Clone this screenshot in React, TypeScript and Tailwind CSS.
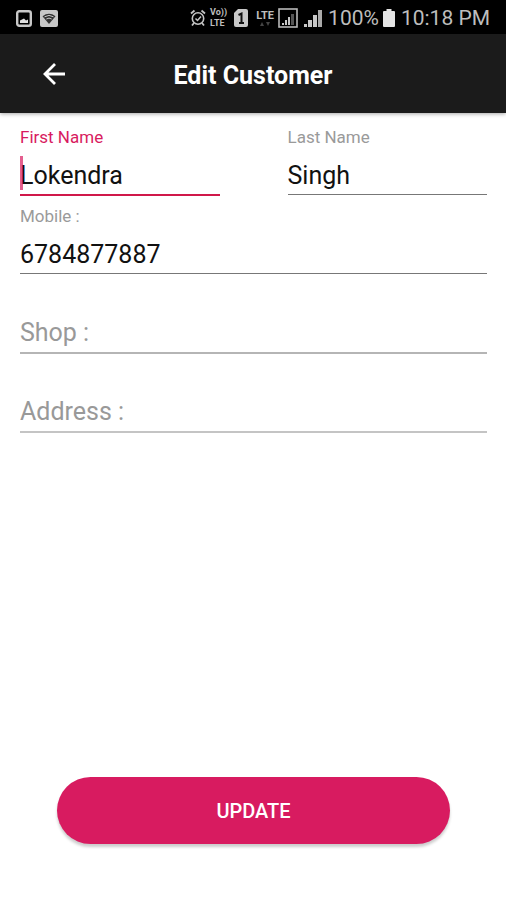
import { useId } from "react";

function ImageIcon() {
  return (
    <svg width="16" height="17" viewBox="0 0 16 17" aria-hidden="true">
      <rect x="1.200" y="1.200" width="13.600" height="14.600" rx="2" fill="none" stroke="#c8c8c8" strokeWidth="2.400" />
      <path d="M4 13v-2.500l2-1 2-1 2 2 2-1V13z" fill="#e0e0e0" />
    </svg>
  );
}

function WifiBadgeIcon() {
  return (
    <svg width="18" height="17" viewBox="0 0 18 17" aria-hidden="true">
      <rect width="18" height="17" rx="2" fill="#c8c8c8" />
      <path d="M2.500 6.200Q9 1.500 15.500 6.200L9 14z" fill="#333" />
      <path d="M4.500 6.800Q9 4 13.500 6.800M6.300 9Q9 7.200 11.700 9" fill="none" stroke="#c8c8c8" strokeWidth="1" />
    </svg>
  );
}

function AlarmIcon() {
  return (
    <svg width="16" height="18" viewBox="0 0 16 18" fill="none" stroke="#c4c4c4" aria-hidden="true">
      <circle cx="8" cy="9.500" r="5.700" strokeWidth="1.600" />
      <path d="M1 4.500L4.500 1.500M15 4.500L11.500 1.500M4 14l-2 2.500M12 14l2 2.500" strokeWidth="1.800" />
      <path d="M5.500 9.500L7.500 11.500 11 7.500" strokeWidth="1.500" />
    </svg>
  );
}

function SimIcon() {
  return (
    <svg width="14" height="18" viewBox="0 0 14 18" aria-hidden="true">
      <path d="M4 0h8a2 2 0 0 1 2 2v14a2 2 0 0 1-2 2H2a2 2 0 0 1-2-2V4z" fill="#c8c8c8" />
      <path d="M4.500 6L7.500 4.500V14M5 14h5" fill="none" stroke="#111" strokeWidth="2" />
    </svg>
  );
}

function BoxedSignalIcon() {
  return (
    <svg width="20" height="20" viewBox="0 0 20 20" aria-hidden="true">
      <rect x="1" y="1" width="18" height="18" fill="none" stroke="#b8b8b8" strokeWidth="1.600" />
      <path d="M4 15h2v2H4zM7 12h2v5H7zM10 9h2v8h-2z" fill="#c8c8c8" />
      <path d="M13 6h3v11h-3z" fill="#555" />
    </svg>
  );
}

function SignalIcon() {
  return (
    <svg width="18" height="18" viewBox="0 0 18 18" aria-hidden="true">
      <path d="M0 15h3v3H0zM4 11h4v7H4zM9 6h4v12H9z" fill="#c8c8c8" />
      <path d="M14 1h4v17h-4z" fill="#aaa" />
    </svg>
  );
}

function BatteryIcon() {
  return (
    <svg width="12" height="18" viewBox="0 0 12 18" aria-hidden="true">
      <path d="M3.500 0h5v2H11a1 1 0 0 1 1 1v14a1 1 0 0 1-1 1H1a1 1 0 0 1-1-1V3a1 1 0 0 1 1-1h2.500z" fill="#e4e4e4" />
    </svg>
  );
}

function StatusBar() {
  return (
    <div className="flex h-[34px] items-center justify-between bg-black px-4 pt-0.5 text-[21px] leading-6 text-[#bdbdbd]">
      <div className="flex items-center gap-2">
        <ImageIcon />
        <WifiBadgeIcon />
      </div>
      <div className="flex items-center gap-1.5 whitespace-nowrap">
        <div className="flex items-center gap-1">
          <AlarmIcon />
          <span className="flex w-[18px] flex-col text-[9px] leading-[11px] font-bold">
            <span>Vo))</span>
            <span>LTE</span>
          </span>
        </div>
        <div className="flex items-center gap-2">
          <SimIcon />
          <span className="flex w-[18px] flex-col items-center text-[11px] leading-[11px] font-bold">
            LTE
            <svg width="10" height="6" viewBox="0 0 10 6" fill="#444" aria-hidden="true">
              <path d="M0 5l2-4 2 4zM6 1h4L8 5z" />
            </svg>
          </span>
        </div>
        <div className="-ml-0.5 flex">
          <BoxedSignalIcon />
        </div>
        <SignalIcon />
        <span className="flex items-center gap-1">
          100%
          <BatteryIcon />
        </span>
        <span>10:18 PM</span>
      </div>
    </div>
  );
}

type FieldProps = {
  label: string;
  value?: string;
  active?: boolean;
  line: string;
  type?: string;
};

function Field({ label, value, active = false, line, type = "text" }: FieldProps) {
  const id = useId();
  const filled = value !== undefined;

  return (
    <div className="pt-2.5">
      <div className="h-5">
        {filled && (
          <label
            htmlFor={id}
            className={`block text-[17px] leading-5 ${active ? "text-[#d81b60]" : "text-[#9a9a9a]"}`}
          >
            {label}
          </label>
        )}
      </div>
      <div className="relative h-[49px]">
        <input
          id={id}
          type={type}
          defaultValue={value}
          placeholder={filled ? undefined : label}
          aria-label={filled ? undefined : label}
          className={`block w-full bg-transparent text-[25px] text-[#111] outline-none placeholder:text-[#999] ${filled ? "pt-2.5" : "pt-2"} ${line}`}
        />
        {active && <span className="absolute bottom-1.5 left-0 h-[34px] w-[3px] bg-[#d81b60]/70" />}
      </div>
    </div>
  );
}

export default function App() {
  return (
    <div className="flex min-h-screen flex-col bg-white font-[Roboto,sans-serif]">
      <StatusBar />
      <header className="grid h-[79px] grid-cols-[1fr_auto_1fr] items-center bg-[#1b1b1b] px-10 text-white shadow-[0_1px_4px_rgba(0,0,0,0.35)]">
        <button type="button" aria-label="Back" className="flex size-7 items-center justify-center">
          <svg width="28" height="28" viewBox="0 0 28 28" fill="none" stroke="currentColor" strokeWidth="2.800" aria-hidden="true">
            <path d="M25 14H5M15 4L5 14l10 10" />
          </svg>
        </button>
        <h1 className="pt-1 text-[25px] leading-8 font-bold">Edit Customer</h1>
      </header>
      <form className="flex flex-1 flex-col pt-1" onSubmit={(e) => e.preventDefault()}>
        <div className="pr-[19px] pl-5">
          <div className="grid grid-cols-2 gap-[68px]">
            <Field label="First Name" value="Lokendra" active line="h-[49px] border-b-2 border-[#d0184a]" />
            <Field label="Last Name" value="Singh" line="h-12 border-b border-[#777]" />
          </div>
          <Field label="Mobile :" value="6784877887" type="tel" line="h-12 border-b border-[#777]" />
          <Field label="Shop :" line="h-[49px] border-b-2 border-[#b5b5b5]" />
          <Field label="Address :" line="h-[49px] border-b-2 border-[#c4c4c4]" />
        </div>
        <div className="mt-auto pr-14 pb-14 pl-[57px]">
          <button
            type="submit"
            className="h-[67px] w-full rounded-full bg-[#d81b60] text-[20px] font-medium text-white shadow-[0_3px_3px_rgba(0,0,0,0.2)]"
          >
            UPDATE
          </button>
        </div>
      </form>
    </div>
  );
}
